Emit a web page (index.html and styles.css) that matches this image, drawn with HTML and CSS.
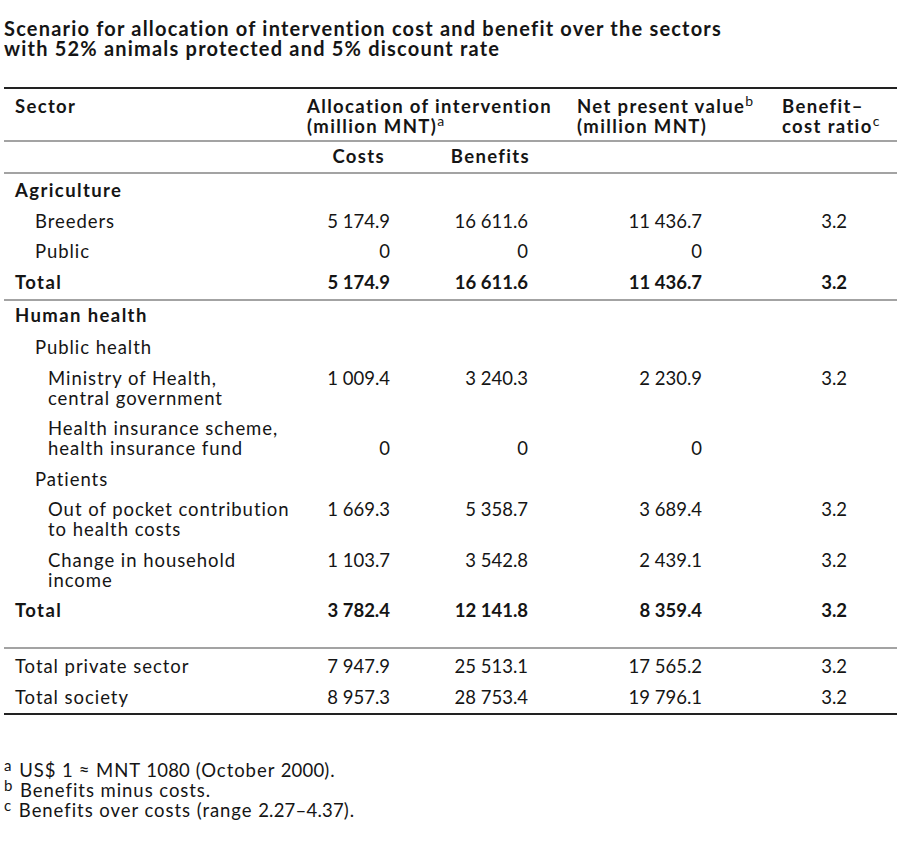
FILE: index.html
```html
<!DOCTYPE html>
<html lang="en">
<head>
<meta charset="utf-8">
<title>Scenario for allocation of intervention cost and benefit</title>
<link rel="stylesheet" href="styles.css">
</head>
<body>
<h1 class="title">Scenario for allocation of intervention cost and benefit over the sectors<br>with 52% animals protected and 5% discount rate</h1>
<table class="data">
  <colgroup>
    <col class="c-sector">
    <col class="c-costs">
    <col class="c-benefits">
    <col class="c-npv">
    <col class="c-bcr">
  </colgroup>
  <thead>
    <tr class="head">
      <th class="h-sector">Sector</th>
      <th class="h-col" colspan="2">Allocation of intervention<br>(million MNT)<sup>a</sup></th>
      <th class="h-col">Net present value<sup>b</sup><br>(million MNT)</th>
      <th class="h-col">Benefit–<br>cost ratio<sup>c</sup></th>
    </tr>
    <tr class="subhead">
      <th></th>
      <th class="sh-costs">Costs</th>
      <th class="sh-benefits">Benefits</th>
      <th></th>
      <th></th>
    </tr>
  </thead>
  <tbody>
    <tr class="first agri">
      <td class="lbl l0 b">Agriculture</td><td></td><td></td><td></td><td></td>
    </tr>
    <tr>
      <td class="lbl l1">Breeders</td>
      <td class="n n-costs">5 174.9</td><td class="n n-ben">16 611.6</td><td class="n n-npv">11 436.7</td><td class="n n-bcr">3.2</td>
    </tr>
    <tr>
      <td class="lbl l1">Public</td>
      <td class="n n-costs">0</td><td class="n n-ben">0</td><td class="n n-npv">0</td><td class="n n-bcr"></td>
    </tr>
    <tr class="last b">
      <td class="lbl l0">Total</td>
      <td class="n n-costs">5 174.9</td><td class="n n-ben">16 611.6</td><td class="n n-npv">11 436.7</td><td class="n n-bcr">3.2</td>
    </tr>
  </tbody>
  <tbody>
    <tr class="first health">
      <td class="lbl l0 b">Human health</td><td></td><td></td><td></td><td></td>
    </tr>
    <tr>
      <td class="lbl l1">Public health</td><td></td><td></td><td></td><td></td>
    </tr>
    <tr>
      <td class="lbl l2">Ministry of Health,<br>central government</td>
      <td class="n n-costs">1 009.4</td><td class="n n-ben">3 240.3</td><td class="n n-npv">2 230.9</td><td class="n n-bcr">3.2</td>
    </tr>
    <tr class="bottomal">
      <td class="lbl l2">Health insurance scheme,<br>health insurance fund</td>
      <td class="n n-costs">0</td><td class="n n-ben">0</td><td class="n n-npv">0</td><td class="n n-bcr"></td>
    </tr>
    <tr>
      <td class="lbl l1">Patients</td><td></td><td></td><td></td><td></td>
    </tr>
    <tr>
      <td class="lbl l2">Out of pocket contribution<br>to health costs</td>
      <td class="n n-costs">1 669.3</td><td class="n n-ben">5 358.7</td><td class="n n-npv">3 689.4</td><td class="n n-bcr">3.2</td>
    </tr>
    <tr>
      <td class="lbl l2">Change in household<br>income</td>
      <td class="n n-costs">1 103.7</td><td class="n n-ben">3 542.8</td><td class="n n-npv">2 439.1</td><td class="n n-bcr">3.2</td>
    </tr>
    <tr class="last spaced b">
      <td class="lbl l0">Total</td>
      <td class="n n-costs">3 782.4</td><td class="n n-ben">12 141.8</td><td class="n n-npv">8 359.4</td><td class="n n-bcr">3.2</td>
    </tr>
  </tbody>
  <tbody class="totals">
    <tr class="first">
      <td class="lbl l0">Total private sector</td>
      <td class="n n-costs">7 947.9</td><td class="n n-ben">25 513.1</td><td class="n n-npv">17 565.2</td><td class="n n-bcr">3.2</td>
    </tr>
    <tr class="end">
      <td class="lbl l0">Total society</td>
      <td class="n n-costs">8 957.3</td><td class="n n-ben">28 753.4</td><td class="n n-npv">19 796.1</td><td class="n n-bcr">3.2</td>
    </tr>
  </tbody>
</table>
<div class="notes">
  <p><sup>a</sup> US$ <span class="num">1</span> ≈ MNT <span class="num">1080</span> (October <span class="num">2000</span>).</p>
  <p><sup>b</sup> Benefits minus costs.</p>
  <p><sup>c</sup> Benefits over costs (range <span class="num">2.27–4.37</span>).</p>
</div>
</body>
</html>
```

FILE: styles.css
```css
html, body {
  background: #ffffff;
}

body {
  margin: 0;
  padding: 18px 3px 0 4px;
  font-family: Lato, "Liberation Sans", sans-serif;
  color: #151515;
}

.title {
  margin: 0 0 29px;
  font-size: 20px;
  font-weight: 700;
  line-height: 20px;
  letter-spacing: 1.2px;
}

.data {
  width: 893px;
  table-layout: fixed;
  border-collapse: collapse;
  font-size: 18.5px;
  line-height: 20px;
}

.c-sector { width: 296px; }
.c-costs { width: 140px; }
.c-benefits { width: 130px; }
.c-npv { width: 205px; }
.c-bcr { width: 122px; }

th, td {
  padding: 5px 0 5.5px;
  vertical-align: top;
  text-align: left;
}

th {
  font-weight: 700;
  letter-spacing: 1.35px;
}

sup {
  font-size: 14px;
  font-weight: 400;
  line-height: 0;
  letter-spacing: 0;
  vertical-align: 7px;
}

.head th {
  border-top: 2px solid #222;
  border-bottom: 2px solid #a3a3a3;
  padding: 7px 0 4px 7px;
}

.head .h-sector {
  padding-left: 11px;
}

.subhead th {
  padding: 4px 0 6px;
  border-bottom: 2px solid #a3a3a3;
}

.subhead .sh-costs {
  text-align: right;
  padding-right: 55px;
}

.subhead .sh-benefits {
  text-align: right;
  padding-right: 40px;
}

.lbl {
  white-space: nowrap;
  letter-spacing: 0.95px;
}

.l0 { padding-left: 11px; }
.l1 { padding-left: 31px; }
.l2 { padding-left: 44px; }

.b,
.b td {
  font-weight: 700;
}

.b.lbl,
.b .lbl {
  letter-spacing: 1.4px;
}

.n {
  text-align: right;
}

.n-costs { padding-right: 50px; }
.n-ben { padding-right: 42px; }
.n-npv { padding-right: 73px; }
.n-bcr { padding-right: 50px; }

.agri td {
  padding-top: 6px;
}

.health td {
  padding-top: 4px;
  padding-bottom: 7.5px;
}

.last td {
  padding-bottom: 7px;
  border-bottom: 2px solid #a3a3a3;
}

.last.spaced td {
  padding-bottom: 27px;
}

.totals .first td {
  padding-top: 7px;
}

.end td {
  border-bottom: 2px solid #222;
  padding-bottom: 6px;
}

.bottomal td {
  vertical-align: bottom;
}

.notes {
  margin-top: 45px;
  font-size: 18.5px;
  line-height: 20px;
  letter-spacing: 0.95px;
}

.notes p {
  margin: 0;
}

.notes .num {
  letter-spacing: 0.2px;
}

.notes sup {
  font-size: 15px;
  vertical-align: 6px;
  margin-right: 2px;
}
```
